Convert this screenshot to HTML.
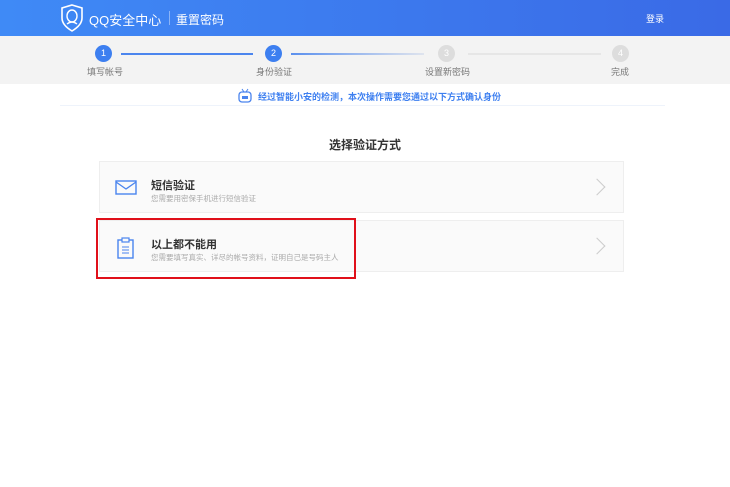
<!DOCTYPE html>
<html><head><meta charset="utf-8"><style>
*{margin:0;padding:0;box-sizing:border-box}
body{width:730px;height:487px;background:#fff;font-family:"Liberation Sans","Noto Sans CJK SC",sans-serif;position:relative;overflow:hidden}
.hd{position:absolute;left:0;top:0;width:730px;height:36px;background:linear-gradient(90deg,#3f8af6,#3a6ae6)}
.t{position:absolute;white-space:nowrap}
.steps{position:absolute;left:0;top:36px;width:730px;height:48px;background:#f3f3f3}
.c{position:absolute;width:17px;height:17px;border-radius:50%;color:#fff;font-size:9px;text-align:center;line-height:17px;top:9px}
.ln{position:absolute;top:17px;height:2px}
.lb{position:absolute;top:29px;font-size:9px;color:#777;white-space:nowrap}
.card{position:absolute;left:99px;width:525px;height:52px;background:#fafafa;border:1px solid #eee}
.arr{position:absolute;right:20px;top:19px;width:12px;height:12px;border-right:1.5px solid #ccc;border-top:1.5px solid #ccc;transform:rotate(45deg)}
</style></head><body>
<div class="hd">
<svg class="t" style="left:60px;top:4px" width="24" height="28" viewBox="0 0 24 28"><path d="M12 1 L22 4 V14 C22 20 17 24 12 27 C7 24 2 20 2 14 V4 Z" fill="none" stroke="#fff" stroke-width="1.6"/><ellipse cx="12" cy="12" rx="5" ry="6" fill="none" stroke="#fff" stroke-width="1.4"/><path d="M7 20 Q12 16 17 20" fill="none" stroke="#fff" stroke-width="1.4"/></svg>
<div class="t" style="left:89px;top:10px;font-size:13px;color:#fff">QQ安全中心</div>
<div class="t" style="left:169px;top:11px;width:1px;height:14px;background:rgba(255,255,255,.4)"></div>
<div class="t" style="left:176px;top:11px;font-size:12px;color:#fff">重置密码</div>
<div class="t" style="left:646px;top:12px;font-size:9px;color:#fff">登录</div>
</div>
<div class="steps">
<div class="c" style="left:95px;background:#3d7ff0">1</div>
<div class="ln" style="left:121px;width:132px;background:#4b85ee"></div>
<div class="c" style="left:265px;background:#3d7ff0">2</div>
<div class="ln" style="left:291px;width:133px;background:linear-gradient(90deg,#5b90ee,#dfe4ee)"></div>
<div class="c" style="left:438px;background:#ddd">3</div>
<div class="ln" style="left:468px;width:133px;background:#e6e6e6"></div>
<div class="c" style="left:612px;background:#ddd">4</div>
<div class="lb" style="left:87px">填写帐号</div>
<div class="lb" style="left:256px">身份验证</div>
<div class="lb" style="left:425px">设置新密码</div>
<div class="lb" style="left:611px">完成</div>
</div>
<svg class="t" style="left:237px;top:88px" width="16" height="15" viewBox="0 0 16 15"><rect x="2" y="4" width="12" height="10" rx="3" fill="none" stroke="#4a84ee" stroke-width="1.3"/><rect x="5" y="8" width="6" height="3" fill="#4a84ee"/><path d="M5 1 L7 4 M11 1 L9 4" stroke="#4a84ee"/></svg>
<div class="t" style="left:258px;top:90px;font-size:9px;color:#3d7ff0;font-weight:bold">经过智能小安的检测，本次操作需要您通过以下方式确认身份</div>
<div class="t" style="left:60px;top:105px;width:605px;height:1px;background:#eef3fb"></div>
<div class="t" style="left:329px;top:136px;font-size:12px;color:#333;font-weight:bold">选择验证方式</div>
<div class="card" style="top:161px">
<svg class="t" style="left:15px;top:18px" width="22" height="15" viewBox="0 0 22 15"><rect x="1" y="1" width="20" height="13" fill="none" stroke="#4a84ee" stroke-width="1.4"/><path d="M1 2 L11 9 L21 2" fill="none" stroke="#4a84ee" stroke-width="1.3"/></svg>
<div class="t" style="left:51px;top:15px;font-size:11px;color:#333;font-weight:bold">短信验证</div>
<div class="t" style="left:51px;top:31px;font-size:7.5px;color:#aaa">您需要用密保手机进行短信验证</div>
<div class="arr"></div></div>
<div class="card" style="top:220px">
<svg class="t" style="left:17px;top:16px" width="17" height="22" viewBox="0 0 17 22"><rect x="1" y="3" width="15" height="18" fill="none" stroke="#4a84ee" stroke-width="1.4"/><rect x="5" y="1" width="7" height="4" fill="#fafafa" stroke="#4a84ee" stroke-width="1.2"/><path d="M5 10H12M5 13H12M5 16H12" stroke="#4a84ee"/></svg>
<div class="t" style="left:51px;top:15px;font-size:11px;color:#333;font-weight:bold">以上都不能用</div>
<div class="t" style="left:51px;top:31px;font-size:7.5px;color:#aaa">您需要填写真实、详尽的帐号资料，证明自己是号码主人</div>
<div class="arr"></div></div>
<div class="t" style="left:96px;top:218px;width:260px;height:61px;border:2.5px solid #e0101a"></div>
</body></html>
